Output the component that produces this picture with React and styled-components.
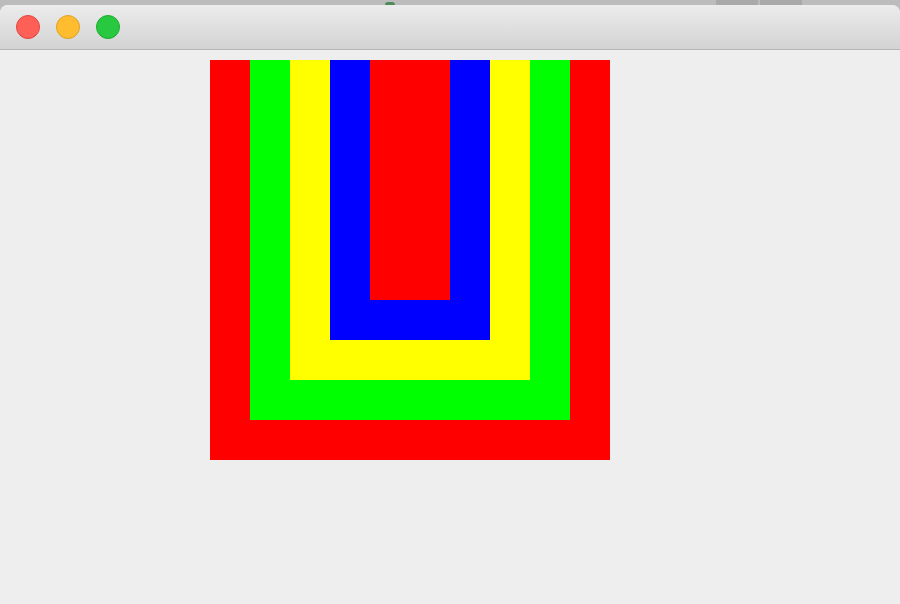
import styled, { createGlobalStyle } from "styled-components";

const GlobalStyle = createGlobalStyle`
  html, body {
    margin: 0;
    padding: 0;
    width: 900px;
    height: 604px;
    overflow: hidden;
    font-family: "Liberation Sans", Arial, sans-serif;
  }
`;

const Desktop = styled.div`
  width: 900px;
  height: 604px;
  background: #bcbcbc;
  display: flex;
  flex-direction: column;
`;

const DesktopStrip = styled.div`
  height: 5px;
  display: flex;
  flex-shrink: 0;
`;

const StripBlock = styled.div`
  width: ${(p) => p.w}px;
  margin-left: ${(p) => p.ml}px;
  background: ${(p) => p.bg};
  border-radius: ${(p) => (p.round ? "5px 5px 0 0" : "0")};
  margin-top: ${(p) => (p.round ? 2 : 0)}px;
`;

const Window = styled.div`
  flex: 1;
  display: flex;
  flex-direction: column;
  border-radius: 8px 8px 0 0;
  overflow: hidden;
  background: #eeeeee;
`;

const TitleBar = styled.div`
  height: 44px;
  display: flex;
  align-items: center;
  gap: 16px;
  padding-left: 16px;
  background: linear-gradient(#ececec, #d3d3d3);
  border-bottom: 1px solid #b5b5b5;
  flex-shrink: 0;
`;

const Light = styled.div`
  width: 22px;
  height: 22px;
  border-radius: 50%;
  background: ${(p) => p.bg};
  border: 1px solid ${(p) => p.border};
`;

const Content = styled.div`
  flex: 1;
  padding: 10px 0 0 210px;
  display: flex;
  align-items: flex-start;
`;

const Band = styled.div`
  width: ${(p) => p.w}px;
  height: ${(p) => p.h}px;
  background: ${(p) => p.color};
  box-sizing: border-box;
  padding: 0 40px 40px;
  display: flex;
  flex-direction: column;
  flex-shrink: 0;
`;

const Core = styled.div`
  width: 80px;
  height: 240px;
  background: #ff0000;
`;

const App = () => {
  return (
    <>
      <GlobalStyle />
      <Desktop>
        <DesktopStrip>
          <StripBlock w={10} ml={385} bg="#4f8a5a" round />
          <StripBlock w={42} ml={321} bg="#a9a9a9" />
          <StripBlock w={42} ml={2} bg="#a9a9a9" />
        </DesktopStrip>
        <Window>
          <TitleBar>
            <Light bg="#fe5f57" border="#e0443e" />
            <Light bg="#febc2e" border="#dea123" />
            <Light bg="#28c840" border="#1aab29" />
          </TitleBar>
          <Content>
            <Band w={400} h={400} color="#ff0000">
              <Band w={320} h={360} color="#00ff00">
                <Band w={240} h={320} color="#ffff00">
                  <Band w={160} h={280} color="#0000ff">
                    <Core />
                  </Band>
                </Band>
              </Band>
            </Band>
          </Content>
        </Window>
      </Desktop>
    </>
  );
};

export default App;
